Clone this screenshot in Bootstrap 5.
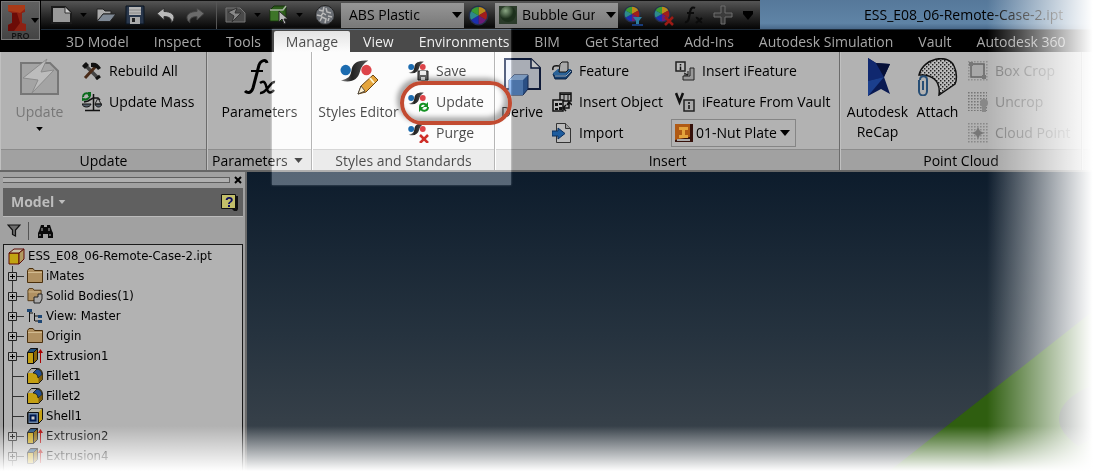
<!DOCTYPE html>
<html lang="en">
<head>
<meta charset="utf-8">
<meta name="viewport" content="width=device-width, initial-scale=1">
<title>ESS_E08_06-Remote-Case-2.ipt</title>
<link href="https://cdn.jsdelivr.net/npm/bootstrap@5.3.0/dist/css/bootstrap.min.css" rel="stylesheet">
<style>
body{font-family:"Open Sans","Noto Sans",sans-serif;font-size:14px;line-height:16px;color:#000;background:#fff;height:100vh}
button,select{font:inherit;color:inherit}
.app{height:100%;overflow:hidden}
.plain{background:none;border:0;padding:0;color:inherit}
svg{display:block;flex:none}
/* title bar and tabs */
.head{display:grid;grid-template-columns:41px 1fr;background:#000}
.app-btn{width:39px;height:39px;margin:1px 0 0 1px;background:linear-gradient(#606060,#444);border:1px solid #777;padding:0;font-size:9px;line-height:9px;font-weight:600;color:#111}
.titlebar{height:30px;background:linear-gradient(#56789a,#5f84a6 80%,#486889);border-bottom:1px solid #1c2a38}
.qat{width:719px;height:29px;background:linear-gradient(#555,#2a2a2a 50%,#050505);border-top:1px solid #111;padding-left:10px}
.doc-title{color:#000;margin-left:104px}
.combo{height:25px;background:linear-gradient(#969696,#787878)}
.combo select,.ribbon select{appearance:none;background:none;border:0;outline:0;height:100%;width:100%;padding:0 18px 0 8px}
.arrow-over{position:absolute;right:5px;top:0;bottom:0;margin:auto;pointer-events:none}
.vsep{width:1px;height:28px;background:#555}
.tabs{height:22px;padding-left:13px;gap:1px}
.tabs a{color:#a6a6a6;text-decoration:none;padding:0 12px;height:21px;line-height:21px;white-space:nowrap}
.tabs a.active{background:linear-gradient(#999,#b2b2b2);color:#000;border-radius:2px 2px 0 0}
/* ribbon */
.ribbon{background:#b2b2b2;height:120px;border-bottom:2px solid #666}
.rpanel{display:flex;flex-direction:column;flex:none;border-right:1px solid #6c6c6c;border-left:1px solid #c0c0c0}
.rbody{flex:1;display:flex;padding-top:3px}
.rlabel{height:21px;line-height:21px;text-align:center;background:#a1a1a1;border-top:1px solid #8c8c8c;white-space:nowrap}
.big{display:flex;flex-direction:column;align-items:center;flex:none;padding-top:3px;white-space:nowrap}
.big span{line-height:31px;height:31px}
.big span.two-line{line-height:20px;height:50px;padding-top:6px;line-height:20px}
.stack{display:flex;flex-direction:column}
.cmd{display:flex;align-items:center;gap:7px;height:31px;white-space:nowrap}
button:disabled{color:#777}
.lit{position:relative;z-index:6}
.drop{width:125px;height:28px;border:1px solid #858585;padding-left:24px}
.ribbon .drop select{padding:0 17px 0 0}
.ring{position:absolute;z-index:7;left:-8px;top:-5px;width:112px;height:44px;border:4px solid #c24b31;border-radius:22px;box-shadow:-3px -3px 5px rgba(0,0,0,.35),inset -4px -4px 5px rgba(0,0,0,.32);pointer-events:none}
/* browser pane */
.side{width:247px;flex:none;background:#a1a1a1;border-right:2px solid #6b6b6b;padding:0 2px 0 3px}
.grip{height:6px;border:1px solid #5f5f5f;border-left:0;background:#b0b0b0;flex:1}
.model{height:29px;background:#606060;color:#bdbdbd;font-weight:700;padding:0 4px 0 8px;border-bottom:1px solid #bbb}
.tree{background:#b2b2b2;border:1px solid #1a1a1a;padding-top:1px;font:13px/20px "DejaVu Sans Condensed","Noto Sans",sans-serif}
.tree li{display:flex;align-items:center;height:20px;gap:3px;padding-left:4px;white-space:nowrap}
.scene{background:linear-gradient(#0d1c2c,#26333f 55%,#3f474e)}
.scene svg{position:absolute;right:0;bottom:0}
/* presentation layers */
.spot{position:absolute;z-index:5;left:272px;top:29px;width:239px;height:156px;background:#4a4a4a;mix-blend-mode:plus-lighter;pointer-events:none;box-shadow:0 0 2px #4a4a4a}
.fade-r{position:absolute;z-index:8;right:0;top:0;bottom:0;width:110px;background:linear-gradient(90deg,rgba(255,255,255,0),#fff 96%);pointer-events:none}
.fade-b{position:absolute;z-index:8;left:0;right:0;bottom:0;height:47px;background:linear-gradient(rgba(255,255,255,0),#fff 96%);pointer-events:none}
</style>
</head>
<body>
<svg width="0" height="0" class="position-absolute" aria-hidden="true">
<defs>
<linearGradient id="gs" x1="0" x2="1"><stop offset="0" stop-color="#888"/><stop offset=".4" stop-color="#222"/><stop offset="1" stop-color="#555"/></linearGradient>
<radialGradient id="gb" cx=".35" cy=".3"><stop offset="0" stop-color="#8aa683"/><stop offset="1" stop-color="#1d301c"/></radialGradient>
<pattern id="dots" width="4" height="4" patternUnits="userSpaceOnUse"><path d="M0 0h1.4v1.4H0zM2 2h1.4v1.4H2z" fill="#222"/></pattern>
<pattern id="dotg" width="3" height="3" patternUnits="userSpaceOnUse"><path d="M0 0h1.6v1.6H0z" fill="#777"/></pattern>
</defs>
<symbol id="styles" viewBox="0 0 36 24"><path d="M1 22C9 20 11 18 12 12 13 4 18 0 30 1 25 4 22 8 21 13 19 21 12 25 1 22z" fill="url(#gs)"/><circle cx="6" cy="11" r="5.500" fill="#1c6cb0"/><circle cx="28" cy="11" r="5.500" fill="#dd4449"/></symbol>
<symbol id="wheel" viewBox="0 0 20 20"><circle cx="10" cy="10" r="9.500" fill="#25304d"/><path d="M10 10V2a8 8 0 0 1 7 4z" fill="#b98a1a"/><path d="M10 10l7-4a8 8 0 0 1 0 8z" fill="#a31d1b"/><path d="M10 10l7 4a8 8 0 0 1-7 4z" fill="#6b1c76"/><path d="M10 10v8a8 8 0 0 1-7-4z" fill="#1c2fae"/><path d="M10 10l-7 4a8 8 0 0 1 0-8z" fill="#2d8a8b"/><path d="M10 10L3 6a8 8 0 0 1 7-4z" fill="#3b9b32"/></symbol>
<symbol id="dn" viewBox="0 0 10 6"><path d="M0 0h10L5 6z" fill="currentColor"/></symbol>
<symbol id="plus" viewBox="0 0 16 20"><path d="M4.500 0v20M9 10.500h7" stroke="#333"/><path d="M.5 6.500h8v8h-8z" fill="#b2b2b2" stroke="#222"/><path d="M2 10.500h5M4.500 8v5" stroke="#000"/></symbol>
<symbol id="leaf" viewBox="0 0 16 20"><path d="M4.500 0v20M4.500 10.500H16" stroke="#333"/></symbol>
<symbol id="folder" viewBox="0 0 16 16"><path d="M.5 14.500v-12l1.500-2h4l1.500 2h8v12z" fill="#b09162" stroke="#4a2f0c"/><path d="M1 4.500h14" stroke="#d1ba8f"/></symbol>
<symbol id="extr" viewBox="0 0 16 16"><path d="M.5 4.500h6v11h-6z" fill="#c4a012" stroke="#111"/><path d="M.5 4.500l3-4h7l-4 4z" fill="#24507c" stroke="#111"/><path d="M6.500 4.500l4-4v11l-4 4z" fill="#8a6608" stroke="#111"/><path d="M13.500 15V3" stroke="#a00"/><path d="M11 5l2.500-4L16 5z" fill="#a00"/></symbol>
<symbol id="fil" viewBox="0 0 16 16"><path d="M.5 5.500l4-5h6c3 0 5 3 5 6v5l-4 4H.5z" fill="#c4a012" stroke="#111"/><path d="M1 5l3.500-4h5L7 5z" fill="#aaa"/><path d="M6 5l4-4c3 0 5 3 5 6l-4 3c0-3-2-5-5-5z" fill="#234f91" stroke="#111" stroke-width=".8"/><path d="M11.500 15V10l4-3.500V11z" fill="#7d5c08"/></symbol>
<symbol id="shell" viewBox="0 0 16 16"><path d="M.5 4.500l4-4h11v11l-4 4H.5z" fill="#c4a012" stroke="#111"/><path d="M1 4.500h10.500v11H1z" fill="#6b86a6" stroke="#111"/><path d="M3.500 7.500h5v5h-5z" fill="#ccc" stroke="#001a50" stroke-width="2"/><path d="M1 4l4-3.500h10L12 4z" fill="#b7b7aa"/></symbol>
</svg>

<div class="app d-flex flex-column position-relative">
<header class="head">
  <div class="position-relative"><button class="app-btn position-absolute" aria-label="Application menu">
    <svg width="37" height="29" viewBox="0 0 37 29"><path d="M6 3h17v7l-3 1v10l4 1v7H6v-6l4-2V11l-4-2z" fill="#8d2113"/><path d="M6 3h17v4l-5 4-4-1-8-1z" fill="#a83a18"/><path d="M10 11h5l3 10-6 8H6v-6l4-2z" fill="#6c0c07"/><path d="M29 16h8l-4 5z" fill="#000"/></svg><span>PRO</span></button></div>
  <div style="min-width:0">
    <div class="titlebar d-flex align-items-center">
      <div class="qat d-flex align-items-center flex-shrink-0">
        <button class="plain" aria-label="New"><svg width="21" height="18" viewBox="0 0 21 18"><path d="M1 1h13l6 6v10H1z" fill="#999" stroke="#1b1b1b" stroke-width="2"/><path d="M14 1v6h6" fill="#ccc" stroke="#333"/></svg></button>
        <svg width="7" height="4" class="mx-2"><use href="#dn"/></svg>
        <button class="plain" aria-label="Open"><svg width="22" height="16" viewBox="0 0 22 16"><path d="M2 13V2h6l2 2h6v3H8l-4 7z" fill="#aaa" stroke="#222"/><path d="M2 14.500L8 7h13l-6 7.500z" fill="#7e8894" stroke="#222"/></svg></button>
        <button class="plain ms-2" aria-label="Save"><svg width="20" height="20" viewBox="0 0 20 20"><path d="M1 1h18v18H1z" fill="#28364b" stroke="#0b1420"/><path d="M4 2h12v8H4z" fill="#b5b5b5"/><path d="M5 12h10v7H5z" fill="#aaa"/><path d="M7 13h3v4H7z" fill="#222"/><path d="M4 5h12M4 8h12" stroke="#888"/></svg></button>
        <button class="plain" style="margin-left:11px" aria-label="Undo"><svg width="19" height="16" viewBox="0 0 19 16"><path d="M1 6.500L8 1v3.500c7 0 10 3 10 6 0 2-1 4-3 5 1-3-1-6-7-6V13z" fill="#b9b9b9" stroke="#333"/></svg></button>
        <button class="plain" style="margin-left:11px" aria-label="Redo"><svg width="19" height="16" viewBox="0 0 19 16"><path d="M18 6.500L11 1v3.500c-7 0-10 3-10 6 0 2 1 4 3 5-1-3 1-6 7-6V13z" fill="#6b6b6b" stroke="#444"/></svg></button>
        <span class="vsep" style="margin-left:11px"></span>
        <button class="plain ms-2" aria-label="Local update"><svg width="21" height="18" viewBox="0 0 21 18"><path d="M1 2h14l5 5v9H1z" fill="#4a4a4a" stroke="#777"/><path d="M3 6l9-4-2 5h6l-9 9 2-6z" fill="#888" stroke="#333"/></svg></button>
        <svg width="7" height="4" class="mx-2"><use href="#dn"/></svg>
        <button class="plain" aria-label="Select"><svg width="19" height="20" viewBox="0 0 19 20"><path d="M1 5l4-4h12v11l-3 4H1z" fill="#2c5c1a" stroke="#14300a"/><path d="M1.500 5.500h12v10h-12z" fill="#3d7528"/><path d="M1 5h13l3-4" stroke="#a9b5a4" fill="none" stroke-width="1.500"/><path d="M10 6v11l3-3 2 5 2-1-2-4h4z" fill="#bbb" stroke="#222"/></svg></button>
        <svg width="7" height="4" class="mx-2"><use href="#dn"/></svg>
        <button class="plain ms-1" aria-label="Material"><svg width="20" height="20" viewBox="0 0 20 20"><circle cx="10" cy="10" r="9.500" fill="#686c72" stroke="#222"/><path d="M4 5l4 1 1-4M11 3l1 4 4 1M2 10l4 1 2-3 3 2M5 16l2-4 4 2-1 4M13 11l4 1M13 16l1-3" stroke="#bbb" fill="none" stroke-width="1.500"/></svg></button>
        <div class="combo position-relative" style="width:123px;margin-left:6px"><select aria-label="Material"><option>ABS Plastic</option></select><svg class="arrow-over" style="right:2px" width="10" height="6"><use href="#dn"/></svg></div>
        <button class="plain" style="margin:0 6px 0 4px" aria-label="Adjust"><svg width="21" height="21"><use href="#wheel"/></svg></button>
        <div class="combo position-relative d-flex align-items-center" style="width:123px;padding-left:4px"><svg width="18" height="18" viewBox="0 0 18 18"><path d="M0 0h18v18H0z" fill="#2b3b2a"/><circle cx="9" cy="8" r="8" fill="url(#gb)"/></svg><select style="padding-left:5px;padding-right:23px" aria-label="Appearance"><option>Bubble Gum</option></select><svg class="arrow-over" style="right:2px" width="10" height="6"><use href="#dn"/></svg></div>
        <button class="plain" style="margin-left:5px" aria-label="Adjust appearance"><svg width="20" height="21" viewBox="0 0 20 21"><use href="#wheel" width="18" height="18"/><path d="M10 12h9l-3 4v4h-3v-4z" fill="#2d7da0"/><path d="M9 20h11" stroke="#173b7a" stroke-width="2"/></svg></button>
        <button class="plain" style="margin-left:10px" aria-label="Clear appearance"><svg width="21" height="21" viewBox="0 0 21 21"><use href="#wheel" width="18" height="18"/><path d="M12 12l8 8M20 12l-8 8" stroke="#9c1b16" stroke-width="2.500"/></svg></button>
        <button class="plain" style="margin-left:10px" aria-label="Parameters"><svg width="19" height="18" viewBox="0 0 19 18"><path d="M1 16c4 1 4-5 5-10s3-5 5-4M3 7h7M12 12c3-1 3 5 6 4M18 12l-6 5" stroke="#0b0b0b" stroke-width="2.200" fill="none"/></svg></button>
        <button class="plain" style="margin-left:10px" aria-label="Add"><svg width="20" height="20" viewBox="0 0 20 20"><path d="M8 1h4v7h7v4h-7v7H8v-7H1V8h7z" fill="#3b3b3b" stroke="#6f6f6f"/></svg></button>
        <button class="plain" style="margin-left:10px" aria-label="Customize"><svg width="10" height="9" viewBox="0 0 10 9"><path d="M0 0h10v3L5 9 0 3z" fill="#000"/></svg></button>
      </div>
      <span class="doc-title text-nowrap">ESS_E08_06-Remote-Case-2.ipt</span>
    </div>
    <nav class="tabs d-flex align-items-end" aria-label="Ribbon tabs">
      <a href="#">3D Model</a><a href="#">Inspect</a><a href="#">Tools</a><a href="#" class="active">Manage</a><a href="#">View</a><a href="#">Environments</a><a href="#">BIM</a><a href="#">Get Started</a><a href="#">Add-Ins</a><a href="#">Autodesk Simulation</a><a href="#">Vault</a><a href="#">Autodesk 360</a>
    </nav>
  </div>
</header>

<section class="ribbon d-flex flex-shrink-0">
  <div class="rpanel" style="width:207px">
    <div class="rbody">
      <button class="plain big" style="width:77px" disabled><svg width="40" height="38" viewBox="0 0 40 38"><path d="M1 5h29l8 8v23H1z" fill="#a4a4a4" stroke="#777" stroke-width="2"/><path d="M3 20L27 1l-6 13 13-2L12 35l6-13z" fill="#bcbcbc" stroke="#8b8b8b"/></svg><span>Update</span><svg width="7" height="4" class="text-black"><use href="#dn"/></svg></button>
      <div class="stack ps-1">
        <button class="plain cmd"><svg width="20" height="18" viewBox="0 0 20 18"><path d="M2 2l14 14" stroke="#444" stroke-width="3.500"/><path d="M14 4L3 16" stroke="#4a2b18" stroke-width="3"/><path d="M0 4l4-4 3 3-4 4zM9 1c4-1 7 0 10 5l-3 2c-2-3-4-3-7-3z" fill="#111"/><path d="M14 17l4-3" stroke="#111" stroke-width="3"/></svg>Rebuild All</button>
        <button class="plain cmd"><svg width="20" height="20" viewBox="0 0 20 20"><path d="M1 5c0-3 3-5 6-3M8 4C7 7 4 8 2 7" stroke="#0a6b1c" stroke-width="2" fill="none"/><path d="M6 0v4h3V0zM0 5v4l4-1z" fill="#0a6b1c"/><path d="M11.500 2v16M2 10l4-1 5-3h5l2 2M3 18.500h15" stroke="#111" stroke-width="1.500" fill="none"/><path d="M0 12h9c-1 4-8 4-9 0zM13 12h7c-1 4-6 4-7 0z" fill="#56606c" stroke="#111"/><path d="M16 6l-3 6h6z" fill="none" stroke="#222"/></svg>Update Mass</button>
      </div>
    </div>
    <div class="rlabel">Update</div>
  </div>
  <div class="rpanel" style="width:105px">
    <div class="rbody"><button class="plain big flex-fill"><svg width="34" height="38" viewBox="0 0 34 38"><path d="M24 5c-1-4-6-3-8 2L10 30c-2 6-6 5-8 3" fill="none" stroke="#000" stroke-width="3"/><path d="M8 13h12" stroke="#000" stroke-width="2"/><path d="M17 25c5-4 6 2 7 6s4 5 7 1M32 24c-5-1-8 12-15 11" fill="none" stroke="#000" stroke-width="2.500"/></svg><span>Parameters</span></button></div>
    <div class="rlabel d-flex align-items-center justify-content-between ps-1 pe-1">Parameters<svg width="9" height="5" class="me-1"><use href="#dn"/></svg></div>
  </div>
  <div class="rpanel" style="width:183px">
    <div class="rbody">
      <button class="plain big" style="width:91px"><svg class="lit" width="38" height="38" viewBox="0 0 38 38"><use href="#styles" x="0" y="0" width="34" height="26"/><path d="M18 36l3-8L33 17l5 5-12 12z" fill="#e5a53c" stroke="#6a4514"/><path d="M18 36l3-8 4 5z" fill="#fff0cf" stroke="#333" stroke-width=".8"/><path d="M30 20l4 5" stroke="#fff3cb" stroke-width="2"/></svg><span>Styles Editor</span></button>
      <div class="stack" style="padding-left:4px">
        <button class="plain cmd"><svg class="lit" width="21" height="20" viewBox="0 0 21 20"><use href="#styles" width="19" height="13"/><path d="M10 10h10v9H10z" fill="#666" stroke="#222"/><path d="M12 10h6v4h-6zM13 16h4v3h-4z" fill="#eee"/></svg>Save</button>
        <div class="position-relative">
          <button class="plain cmd"><svg class="lit" width="21" height="20" viewBox="0 0 21 20"><use href="#styles" width="19" height="13"/><path d="M12 15c0-4 5-4 6-2M20 15c0 4-5 5-7 2" stroke="#159223" stroke-width="2" fill="none"/><path d="M20 10v5h-5zM11 20v-5h5z" fill="#159223"/></svg>Update</button>
          <span class="ring"></span>
        </div>
        <button class="plain cmd"><svg class="lit" width="21" height="20" viewBox="0 0 21 20"><use href="#styles" width="19" height="13"/><path d="M12 12l8 8M20 12l-8 8" stroke="#cf2e28" stroke-width="2.500"/></svg>Purge</button>
      </div>
    </div>
    <div class="rlabel">Styles and Standards</div>
  </div>
  <div class="rpanel" style="width:345px">
    <div class="rbody">
      <button class="plain big" style="width:52px"><svg width="38" height="38" viewBox="0 0 38 38"><path d="M2 1h26l9 9v21H2z" fill="#a9adb5" stroke="#0e1a38" stroke-width="2"/><path d="M28 1v9h9" fill="#c5c5c5" stroke="#0e1a38" stroke-width="1.500"/><path d="M6 22l5-5h14v14l-5 6H6z" fill="#2a4f84" stroke="#13264c"/><path d="M6 22l5-5h14l-5 5z" fill="#7c99bd"/><path d="M6 22h14v15H6z" fill="#4c74a8"/></svg><span>Derive</span></button>
      <div class="stack ps-1" style="width:123px">
        <button class="plain cmd"><svg width="20" height="20" viewBox="0 0 20 20"><path d="M1 13l5-4h13l1 2-6 7H3z" fill="#123e70" stroke="#0b2140"/><path d="M1 12l5-4h13l-5 6H2z" fill="#2b6398"/><path d="M3 15h11l5-5" stroke="#9aa9b8" fill="none"/><path d="M8 3l2-2h6v8l-2 2H7z" fill="#a9a9a9" stroke="#111"/><path d="M1 9c-1-4 2-5 6-4" stroke="#111" fill="none" stroke-width="1.500"/></svg>Feature</button>
        <button class="plain cmd"><svg width="20" height="20" viewBox="0 0 20 20"><path d="M8 1h11v8H8z" fill="#aaa" stroke="#111" stroke-width="1.500"/><path d="M8 2.500h11M12 3v6M16 3v6" stroke="#111"/><path d="M1 8h10v11H1z" fill="#bbb" stroke="#111" stroke-width="1.500"/><path d="M3 11h3v3H3zM3 16h3v2H3zM7 11h3v2H7zM7 15h3v3H7z" fill="#111"/><path d="M12 16h5v-4M14 13l-3 3 3 3M15 13l2-3 3 3" stroke="#111" fill="none" stroke-width="1.500"/></svg>Insert Object</button>
        <button class="plain cmd"><svg width="20" height="20" viewBox="0 0 20 20"><path d="M4.500.5h9l5 5v14h-14z" fill="#bbb" stroke="#333"/><path d="M13.500.5v5h5" fill="#999" stroke="#333"/><path d="M0 8h6V5l7 5.500L6 16v-3H0z" fill="#1d5c9e" stroke="#0b2e5c"/></svg>Import</button>
      </div>
      <div class="stack flex-fill">
        <button class="plain cmd ps-1"><svg width="20" height="20" viewBox="0 0 20 20"><path d="M1 1h9v9H1z" fill="#bbb" stroke="#222" stroke-width="1.500"/><path d="M5.500 3v1.500M5.500 5.500V9" stroke="#111" stroke-width="1.500"/><path d="M19 7v12H8v-4h7V7z" fill="#999" stroke="#222"/><path d="M9 12l4 2M13 10v4H9" stroke="#111" fill="none"/></svg>Insert iFeature</button>
        <button class="plain cmd ps-1"><svg width="20" height="20" viewBox="0 0 20 20"><path d="M1 1l3.500 9L8 1" stroke="#111" stroke-width="2.500" fill="none"/><path d="M9 8h10v11H9z" fill="#aaa" stroke="#222" stroke-width="1.500"/><path d="M14 10v2M14 13v4" stroke="#111" stroke-width="1.500"/></svg>iFeature From Vault</button>
        <div class="cmd"><div class="drop position-relative"><svg class="position-absolute top-0 bottom-0 my-auto" style="left:3px" width="18" height="18" viewBox="0 0 18 18"><path d="M0 0h18v18H0z" fill="#35100a"/><path d="M0 0h15v13L0 16z" fill="#b05a14"/><path d="M4 3h9v3h-3v5h3v3H4v-3h3V6H4z" fill="#e3a33c"/><path d="M2 15h13v2H2z" fill="#aaa"/></svg><select aria-label="iFeature"><option>01-Nut Plate</option></select><svg class="arrow-over" width="10" height="6"><use href="#dn"/></svg></div></div>
      </div>
    </div>
    <div class="rlabel">Insert</div>
  </div>
  <div class="rpanel" style="width:242px">
    <div class="rbody">
      <button class="plain big" style="width:73px"><svg width="38" height="38" viewBox="0 0 38 38"><path d="M9 0l8 5 14 1-6 13 6 17-9-5-13 7z" fill="#0a1a52"/><path d="M9 0l8 5 8 14-16 4z" fill="#10286f"/><path d="M9 23l16-4-16 19z" fill="#1b3f8d"/><path d="M17 5l14 1-6 13z" fill="#061038"/></svg><span class="two-line">Autodesk<br>ReCap</span></button>
      <button class="plain big" style="width:47px"><svg width="40" height="38" viewBox="0 0 40 38"><path d="M1 17C5 0 30-5 36 8c3 6 3 15 1 18L21 37C23 22 13 16 1 17z" fill="#bbb"/><path d="M1 17C5 0 30-5 36 8c3 6 3 15 1 18L21 37C23 22 13 16 1 17z" fill="url(#dots)" stroke="#111" stroke-width="1.500"/><path d="M2 22c0-5 7-5 7 0v11c0 6-8 6-8 0V22M5 23v9" fill="none" stroke="#274e75" stroke-width="2"/></svg><span>Attach</span></button>
      <div class="stack" style="padding-left:7px">
        <button class="plain cmd" disabled><svg width="20" height="20" viewBox="0 0 20 20"><path d="M0 0h20v20H0z" fill="url(#dotg)" opacity=".6"/><path d="M3 3h13v13H3z" fill="#a8a8a8" stroke="#666" stroke-width="1.500"/><path d="M1 1h4v4H1zM14 14h4v4h-4z" fill="#777"/></svg>Box Crop</button>
        <button class="plain cmd" disabled><svg width="20" height="20" viewBox="0 0 20 20"><path d="M0 0h19v19H0z" fill="url(#dotg)"/><circle cx="16" cy="11" r="4" fill="#888"/><path d="M14 14h4v6h-4z" fill="#888"/></svg>Uncrop</button>
        <button class="plain cmd" disabled><svg width="20" height="20" viewBox="0 0 20 20"><path d="M0 0h20v20H0z" fill="url(#dotg)" opacity=".7"/><path d="M10 4l2 4 4 2-4 2-2 4-2-4-4-2 4-2z" fill="#777"/></svg>Cloud Point</button>
      </div>
    </div>
    <div class="rlabel">Point Cloud</div>
  </div>
  <div class="rpanel flex-fill overflow-hidden" style="width:0">
    <div class="rbody"></div><div class="rlabel"></div>
  </div>
</section>

<main class="d-flex flex-fill" style="min-height:0">
  <aside class="side d-flex flex-column">
    <div class="d-flex align-items-center gap-1" style="height:16px;padding-right:1px"><span class="grip"></span><button class="plain" aria-label="Close"><svg width="8" height="8" viewBox="0 0 8 8"><path d="M1 1l6 6M7 1L1 7" stroke="#000" stroke-width="2"/></svg></button></div>
    <div class="model d-flex align-items-center justify-content-between flex-shrink-0"><button class="plain d-flex align-items-center gap-1">Model<svg width="8" height="4"><use href="#dn"/></svg></button>
      <button class="plain" aria-label="Help"><svg width="19" height="19" viewBox="0 0 19 19"><path d="M4 3h14v13l-1 2h-3l-2-2H4z" fill="#111"/><path d="M1.500 1.500h14v14h-14z" fill="#c3bf6a" stroke="#111"/><text x="5" y="13.500" font-family="Liberation Sans,sans-serif" font-size="14" font-weight="700" fill="#0a0a60">?</text></svg></button></div>
    <div class="d-flex align-items-center flex-shrink-0" style="height:27px;padding-left:4px">
      <button class="plain" aria-label="Filter"><svg width="14" height="13" viewBox="0 0 14 13"><path d="M1 1h12L8.500 6v6l-3-1.500V6z" fill="#6c6c6c" stroke="#111" stroke-width="1.200"/></svg></button>
      <span style="width:1px;height:18px;background:#555;margin:0 9px 0 7px"></span>
      <button class="plain" aria-label="Find"><svg width="15" height="14" viewBox="0 0 15 14"><path d="M3 1h3v2h3V1h3l2 6 1 2v5h-5v-4H5v4H0V9l1-2z" fill="#0a0a0a"/><path d="M4 4v3M11 4v3M2 10v2M12 10v2" stroke="#b2b2b2"/></svg></button>
    </div>
    <ul class="tree list-unstyled mb-0 flex-fill overflow-hidden">
      <li><svg width="17" height="17" viewBox="0 0 17 17"><path d="M1 5h10v11H1z" fill="#c2a413" stroke="#5f0c08"/><path d="M1 5l5-4h10l-5 4z" fill="#c9c3a8" stroke="#5f0c08"/><path d="M11 5l5-4v10l-5 5z" fill="#b29a60" stroke="#5f0c08"/></svg>ESS_E08_06-Remote-Case-2.ipt</li>
      <li><svg width="16" height="20"><use href="#plus"/></svg><svg width="16" height="16"><use href="#folder"/></svg>iMates</li>
      <li><svg width="16" height="20"><use href="#plus"/></svg><svg width="16" height="16" viewBox="0 0 16 16"><use href="#folder" width="15" height="14"/><path d="M7 9h4v-3h4v5l-2 4H7z" fill="#aaa" stroke="#222"/></svg>Solid Bodies(1)</li>
      <li><svg width="16" height="20"><use href="#plus"/></svg><svg width="16" height="16" viewBox="0 0 16 16"><path d="M2.500 3v11M2.500 5H6M7.500 5v8M8 8h3M8 13h3" stroke="#111" fill="none"/><path d="M0 1h5v3H0zM11 7h4v3h-4zM11 12h4v3h-4z" fill="#1d4674"/></svg>View: Master</li>
      <li><svg width="16" height="20"><use href="#plus"/></svg><svg width="16" height="16"><use href="#folder"/></svg>Origin</li>
      <li><svg width="16" height="20"><use href="#plus"/></svg><svg width="16" height="16"><use href="#extr"/></svg>Extrusion1</li>
      <li><svg width="16" height="20"><use href="#leaf"/></svg><svg width="16" height="16"><use href="#fil"/></svg>Fillet1</li>
      <li><svg width="16" height="20"><use href="#leaf"/></svg><svg width="16" height="16"><use href="#fil"/></svg>Fillet2</li>
      <li><svg width="16" height="20"><use href="#leaf"/></svg><svg width="16" height="16"><use href="#shell"/></svg>Shell1</li>
      <li><svg width="16" height="20"><use href="#plus"/></svg><svg width="16" height="16"><use href="#extr"/></svg>Extrusion2</li>
      <li><svg width="16" height="20"><use href="#plus"/></svg><svg width="16" height="16"><use href="#extr"/></svg>Extrusion4</li>
    </ul>
  </aside>
  <div class="scene flex-fill position-relative overflow-hidden">
    <svg width="210" height="170" viewBox="0 0 210 170"><path d="M0 170L210 5v165z" fill="#2f5e10"/><path d="M210 81c-22 7-38 20-38 35 0 10 8 19 19 27l19-10z" fill="#2f3d30"/></svg>
  </div>
</main>
<div class="spot"></div>
<div class="fade-r"></div>
<div class="fade-b"></div>
</div>
<script src="https://cdn.jsdelivr.net/npm/bootstrap@5.3.0/dist/js/bootstrap.bundle.min.js"></script>
</body>
</html>
